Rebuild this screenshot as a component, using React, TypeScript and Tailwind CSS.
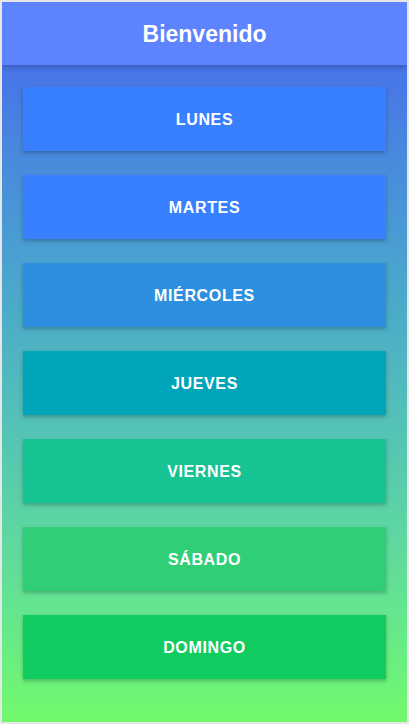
import React from "react";

const days = [
  { name: "Lunes", color: "bg-[#3880ff]" },
  { name: "Martes", color: "bg-[#3880ff]" },
  { name: "Miércoles", color: "bg-[#2d8fdf]" },
  { name: "Jueves", color: "bg-[#00a5ba]" },
  { name: "Viernes", color: "bg-[#16c392]" },
  { name: "Sábado", color: "bg-[#30cf77]" },
  { name: "Domingo", color: "bg-[#10cc60]" },
];

export default function App() {
  return (
    <div
      className="w-[409px] h-[724px] border-2 border-[#e6e6e6] flex flex-col overflow-hidden"
      style={{ fontFamily: '"Liberation Sans", Arial, sans-serif' }}
    >
      <header className="h-[63px] shrink-0 bg-[#5e83fe] flex items-center justify-center shadow-[0_2px_5px_rgba(0,0,0,0.22)] relative z-10">
        <h1 className="text-white font-bold text-[23px] pt-px">Bienvenido</h1>
      </header>
      <main className="flex-1 bg-gradient-to-b from-[#4873e8] to-[#71fa6b] px-[21px] pt-[22px] flex flex-col gap-6">
        {days.map((d) => (
          <button
            key={d.name}
            className={`${d.color} h-16 w-full pt-[2px] flex items-center justify-center text-white font-bold text-base uppercase tracking-[0.04em] shadow-[0_2px_4px_rgba(0,0,0,0.25)]`}
          >
            {d.name}
          </button>
        ))}
      </main>
    </div>
  );
}
